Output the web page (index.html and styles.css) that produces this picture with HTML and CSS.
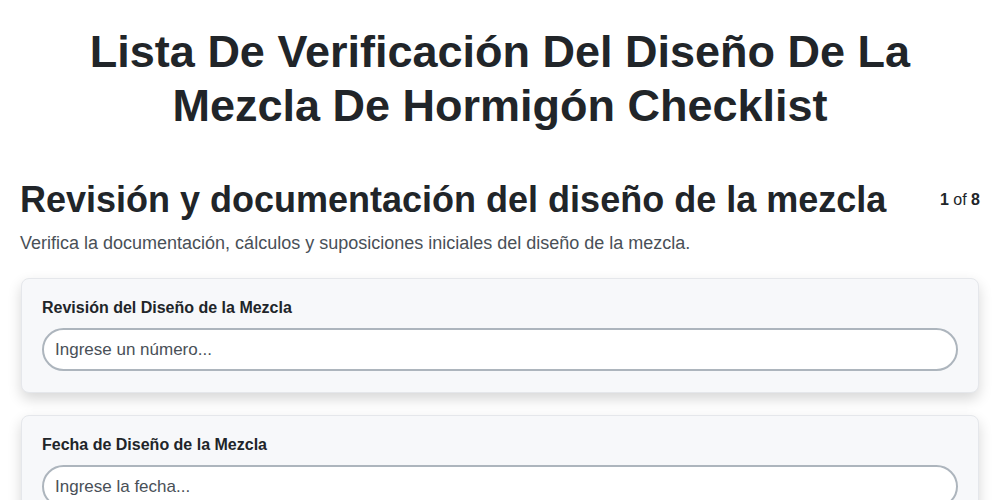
FILE: index.html
```html
<!DOCTYPE html>
<html lang="es">
<head>
<meta charset="utf-8">
<link rel="stylesheet" href="styles.css">
</head>
<body>
<div class="page">
  <h1 class="title">Lista De Verificación Del Diseño De La Mezcla De Hormigón Checklist</h1>
  <div class="section-head">
    <h2 class="section-title">Revisión y documentación del diseño de la mezcla</h2>
    <div class="counter"><b>1</b> of <b>8</b></div>
  </div>
  <p class="desc">Verifica la documentación, cálculos y suposiciones iniciales del diseño de la mezcla.</p>
  <div class="card">
    <label class="label">Revisión del Diseño de la Mezcla</label>
    <input class="input" type="text" placeholder="Ingrese un número...">
  </div>
  <div class="card">
    <label class="label">Fecha de Diseño de la Mezcla</label>
    <input class="input" type="text" placeholder="Ingrese la fecha...">
  </div>
</div>
</body>
</html>
```
FILE: styles.css
```css
html, body { margin: 0; padding: 0; background: #fff; }
body { font-family: "Liberation Sans", Arial, sans-serif; color: #212529; }
.page { padding: 0 20px; }
.title {
  margin: 0 auto;
  max-width: 880px;
  padding-top: 25px;
  text-align: center;
  font-size: 45px;
  line-height: 54px;
  font-weight: 700;
  color: #212529;
}
.section-head {
  display: flex;
  align-items: center;
  justify-content: space-between;
  margin-top: 45px;
}
.section-title {
  margin: 0;
  font-size: 36px;
  line-height: 44px;
  font-weight: 700;
}
.counter { font-size: 16px; color: #212529; }
.desc {
  margin: 11px 0 24px;
  font-size: 18px;
  color: #495057;
}
.card {
  background: #f7f8fa;
  border: 1px solid #e5e7eb;
  border-radius: 8px;
  box-shadow: 0 6px 14px rgba(0,0,0,0.16);
  padding: 20px 20px 21px;
  margin: 0 1px 22px;
  display: flex;
  flex-direction: column;
}
.label {
  font-size: 16px;
  font-weight: 700;
  margin-bottom: 11px;
}
.input {
  height: 43px;
  box-sizing: border-box;
  border: 2px solid #adb5bd;
  border-radius: 22px;
  padding: 0 11px;
  font-family: "Liberation Sans", Arial, sans-serif;
  font-size: 17px;
  background: #fff;
  color: #212529;
}
.input::placeholder { color: #495057; }
```
